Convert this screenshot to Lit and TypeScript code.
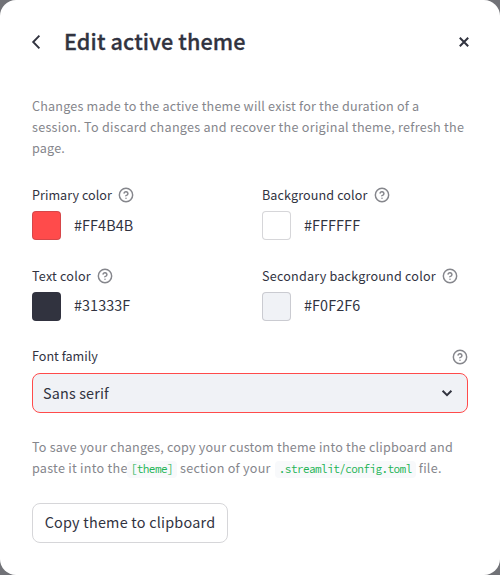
import { LitElement, html, css } from "lit";
import { customElement, property } from "lit/decorators.js";

@customElement("help-icon")
export class HelpIcon extends LitElement {
  static styles = css`
    :host { display: block; width: 16px; height: 16px; color: #85868c; }
    svg { display: block; }
  `;
  render() {
    return html`<svg width="16" height="16" viewBox="0 0 24 24" fill="none" stroke="currentColor" stroke-width="2.2" stroke-linecap="round" stroke-linejoin="round" overflow="visible">
      <circle cx="12" cy="12" r="10"></circle>
      <path d="M9.09 9a3 3 0 0 1 5.83 1c0 2-3 3-3 3"></path>
      <path d="M12 17h.01"></path>
    </svg>`;
  }
}

@customElement("color-field")
export class ColorField extends LitElement {
  @property() label = "";
  @property() value = "";
  @property({ type: Number }) tracking = 0.1;
  static styles = css`
    :host { display: block; }
    .label { display: flex; align-items: center; gap: 6px; height: 20px; font-size: 12.6px; white-space: nowrap; }
    .label span, .row span { padding-bottom: 2px; }
    .row { display: flex; align-items: center; gap: 13px; margin-top: 6px; height: 29px; font-size: 14.4px; letter-spacing: 0.07px; }
    :host(.lower) .row span { padding-bottom: 4px; }
    .swatch { box-sizing: border-box; width: 29px; height: 29px; border: 1px solid rgba(49, 51, 63, 0.2); border-radius: 4px; }
  `;
  render() {
    return html`
      <div class="label" style="letter-spacing:${this.tracking}px"><span>${this.label}</span><help-icon></help-icon></div>
      <div class="row"><div class="swatch" style="background-color:${this.value}"></div><span>${this.value}</span></div>
    `;
  }
}

@customElement("app-root")
export class AppRoot extends LitElement {
  static styles = css`
    :host { display: block; height: 575px; background: #717277; color: #31333f; font-family: "Source Sans Pro", "Noto Sans CJK JP", sans-serif; }
    .dialog { box-sizing: border-box; height: 575px; padding: 24px 32px 32px; background: #fff; border-radius: 16px; }
    header { display: flex; align-items: center; height: 36px; }
    svg { display: block; }
    .back { width: 16px; margin-left: -4px; }
    .close { margin-right: -1px; }
    h1 { flex: 1; margin: 0 0 2px 20px; font-size: 21.6px; line-height: 36px; font-weight: 500; letter-spacing: 0.12px; -webkit-text-stroke: 0.3px currentColor; white-space: nowrap; }
    p { margin: 0; font-size: 12.6px; line-height: 21px; color: #85868c; white-space: nowrap; }
    p span { display: block; height: 21px; letter-spacing: 0.19px; }
    p .wide { letter-spacing: 0.26px; }
    p .mixed { letter-spacing: 0.26px; }
    .intro { margin-top: 35px; }
    .colors { display: grid; grid-template-columns: 230px 1fr; row-gap: 26px; margin-top: 27px; }
    .font-label { display: flex; align-items: center; justify-content: space-between; height: 20px; margin-top: 26px; font-size: 12.6px; }
    .font-label span { padding-bottom: 4px; }
    .select span { padding-bottom: 2px; }
    .select { box-sizing: border-box; display: flex; align-items: center; justify-content: space-between; height: 40px; margin-top: 6px; padding: 0 12px 0 10px; border: 1px solid #ff4b4b; border-radius: 8px; background: #f0f2f6; font-size: 14.4px; letter-spacing: 0.16px; }
    .save { margin-top: 23px; }
    code { display: inline-block; height: 17px; margin-left: -4px; padding: 0 4px; border-radius: 4px; background: #f8f9fb; color: #21b354; font-family: "Source Code Pro", "Noto Sans Mono CJK JP", monospace; font-size: 11px; line-height: 17px; letter-spacing: -0.56px; }
    code + code { margin-left: 1px; }
    button { box-sizing: border-box; display: block; width: 196px; height: 40px; margin-top: 25px; padding: 0 0 3px; border: 1px solid #d6d6d9; border-radius: 8px; background: #fff; color: inherit; font: inherit; font-size: 14.4px; letter-spacing: 0.23px; white-space: nowrap; }
  `;
  render() {
    return html`<div class="dialog">
      <header>
        <svg class="back" width="16" height="16" viewBox="0 0 16 16" fill="none" stroke="currentColor" stroke-width="1.9"><path d="M11.4 1.6 5.2 8l6.2 6.4"></path></svg>
        <h1>Edit active theme</h1>
        <svg class="close" width="10" height="10" viewBox="0 0 10 10" fill="none" stroke="currentColor" stroke-width="2"><path d="m.8.8 8.4 8.4M9.2.8.8 9.2"></path></svg>
      </header>
      <p class="intro"><span>Changes made to the active theme will exist for the duration of a</span><span class="wide">session. To discard changes and recover the original theme, refresh the</span><span>page.</span></p>
      <div class="colors">
        <color-field label="Primary color" value="#FF4B4B" tracking="0.03"></color-field>
        <color-field label="Background color" value="#FFFFFF"></color-field>
        <color-field class="lower" label="Text color" value="#31333F" tracking="0.2"></color-field>
        <color-field class="lower" label="Secondary background color" value="#F0F2F6" tracking="0.2"></color-field>
      </div>
      <div class="font-label"><span>Font family</span><help-icon></help-icon></div>
      <div class="select"><span>Sans serif</span><svg width="16" height="16" viewBox="0 0 16 16" fill="none" stroke="currentColor" stroke-width="2"><path d="m3.6 5.7 4.4 4.4 4.4-4.4"></path></svg></div>
      <p class="save"><span>To save your changes, copy your custom theme into the clipboard and</span><span class="mixed">paste it into the <code>[theme]</code> section of your <code>.streamlit/config.toml</code> file.</span></p>
      <button>Copy theme to clipboard</button>
    </div>`;
  }
}
